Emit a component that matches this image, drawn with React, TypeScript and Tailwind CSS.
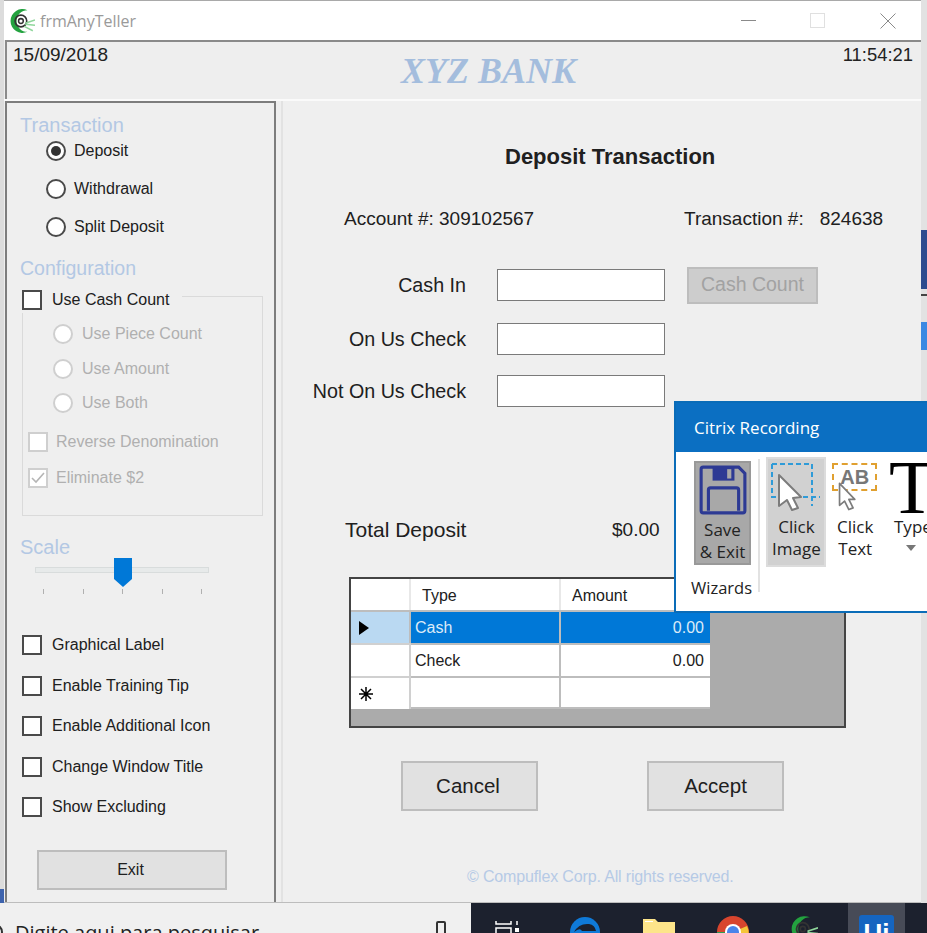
import React from "react";

const sans = "font-['Liberation_Sans',Arial,sans-serif]";
const seg = "font-['Open_Sans','Noto_Sans',sans-serif]";

function Radio({ checked = false, disabled = false }: { checked?: boolean; disabled?: boolean }) {
  return (
    <span className={`flex h-[20px] w-[20px] shrink-0 items-center justify-center rounded-full border-2 bg-white ${disabled ? "border-[#cfcfcf]" : "border-[#4a4a4a]"}`}>
      {checked && <span className="h-[10px] w-[10px] rounded-full bg-[#333]" />}
    </span>
  );
}

function Check({ disabled = false, checked = false }: { disabled?: boolean; checked?: boolean }) {
  return (
    <span className={`flex h-[20px] w-[20px] shrink-0 items-center justify-center border-2 bg-white ${disabled ? "border-[#cfcfcf]" : "border-[#4a4a4a]"}`}>
      {checked && (
        <svg width="16" height="14" viewBox="0 0 16 14">
          <path d="M2 7 L6 11 L14 2" fill="none" stroke="#b5b5b5" strokeWidth="1.6" />
        </svg>
      )}
    </span>
  );
}

function RadioRow({ label, checked, className = "" }: { label: string; checked?: boolean; className?: string }) {
  return (
    <div className={`ml-[39px] flex h-[26px] items-center gap-[8px] text-[16px] text-[#202020] ${className}`}>
      <Radio checked={checked} />
      <span>{label}</span>
    </div>
  );
}

function SubRadio({ label, className = "" }: { label: string; className?: string }) {
  return (
    <div className={`ml-[30px] flex h-[26px] items-center gap-[9px] text-[16px] text-[#b0b0b0] ${className}`}>
      <Radio disabled />
      <span>{label}</span>
    </div>
  );
}

function CheckRow({ label, className = "" }: { label: string; className?: string }) {
  return (
    <div className={`ml-[15px] flex h-[26px] items-center gap-[10px] text-[16px] text-[#202020] ${className}`}>
      <Check />
      <span>{label}</span>
    </div>
  );
}

function Section({ children, className = "" }: { children: React.ReactNode; className?: string }) {
  return <div className={`ml-[13px] h-[24px] text-[20px] leading-[24px] text-[#b3c8e4] ${className}`}>{children}</div>;
}

function FieldRow({ label, className = "", children }: { label: string; className?: string; children?: React.ReactNode }) {
  return (
    <div className={`flex h-[32px] items-center text-[19.7px] text-[#202020] ${className}`}>
      <span className="mt-[2px] w-[183px] whitespace-nowrap text-right">{label}</span>
      <span className="ml-[31px] h-[32px] w-[168px] border border-[#7a7a7a] bg-white" />
      {children}
    </div>
  );
}

function GridHeaderCell({ children }: { children?: React.ReactNode }) {
  return <div className="flex items-center border-r-2 border-[#e8e8e8] bg-white pl-[11px] pt-[2px] text-[16px] text-[#202020]">{children}</div>;
}

function LogoSwirl({ size }: { size: number }) {
  return (
    <svg width={size} height={size} viewBox="0 0 24 24">
      <path d="M17 2 A11 11 0 1 0 17 22 A9 9 0 0 1 17 2Z" fill="#23a23f" />
      <circle cx="11" cy="12" r="5.4" fill="none" stroke="#333" strokeWidth="1.5" />
      <circle cx="11" cy="12" r="2.2" fill="none" stroke="#333" strokeWidth="1.4" />
      <path d="M15 14 L24 11 M15 15 L24 16 M14 17 L22 21" stroke="#8fd69b" strokeWidth="1.4" />
    </svg>
  );
}

function Popup() {
  return (
    <div className={`absolute left-[674px] top-[401px] flex h-[212px] w-[260px] flex-col overflow-hidden border-2 border-r-0 border-[#0a6cb8] bg-white ${seg}`}>
      <div className="flex h-[49px] shrink-0 items-center bg-[#0b6fc2] pl-[18px] text-[17px] text-white">Citrix Recording</div>
      <div className="flex items-start text-[#222]">
        <div className="ml-[15px] flex w-[68px] flex-col items-start">
          <div className="mt-[9px] ml-[3px] flex h-[104px] w-[57px] flex-col items-center border-2 border-[#999] bg-[#a8a8a8]">
            <svg className="mt-[2px]" width="48" height="50" viewBox="0 0 46 48">
              <path d="M2 4 Q2 2 4 2 H38 L44 8 V44 Q44 46 42 46 H4 Q2 46 2 44Z" fill="none" stroke="#2d3a94" strokeWidth="3" />
              <path d="M13 2 H34 V15 H13Z" fill="#2d3a94" />
              <rect x="27" y="4" width="4" height="9" fill="#a8a8a8" />
              <path d="M9 44 V24 Q9 22 11 22 H36 Q38 22 38 24 V44" fill="none" stroke="#2d3a94" strokeWidth="3" />
            </svg>
            <span className="mt-[4px] text-center text-[17px] leading-[22px]">Save<br />&amp; Exit</span>
          </div>
          <span className="mt-[12px] text-[16.5px] leading-[22px]">Wizards</span>
        </div>
        <div className="mt-[7px] h-[133px] w-[2px] bg-[#e2e2e2]" />
        <div className="ml-[6px] mt-[5px] flex h-[110px] w-[60px] flex-col items-center border-2 border-[#dcdcdc] bg-[#d1d1d1]">
          <svg className="mt-[2px]" width="56" height="52" viewBox="0 0 56 52">
            <path d="M4 3 H44 V45" fill="none" stroke="#2f9bd8" strokeWidth="2" strokeDasharray="5 3" />
            <path d="M4 3 V36 H52" fill="none" stroke="#2f9bd8" strokeWidth="2" strokeDasharray="5 3" />
            <path d="M11 14 L33 36 L25 37 L30 47 L24 49 L19 39 L11 45Z" fill="#fff" stroke="#7c7c7c" strokeWidth="2" strokeLinejoin="round" />
          </svg>
          <span className="mt-[3px] text-center text-[17px] leading-[22px]">Click<br />Image</span>
        </div>
        <div className="ml-[1px] mt-[5px] flex w-[56px] flex-col items-center">
          <div className="relative mt-[6px] h-[48px] w-[50px]">
            <div className={`ml-[2px] flex h-[28px] w-[45px] items-center justify-center border-2 border-dashed border-[#e0a030] text-[20px] font-bold leading-none text-[#777] ${sans}`}>AB</div>
            <svg className="absolute left-[7px] top-[18px]" width="22" height="30" viewBox="0 0 26 34">
              <path d="M3 2 L21 21 L14 21 L19 31 L14 33 L9 23 L3 28Z" fill="#fff" stroke="#7c7c7c" strokeWidth="2" strokeLinejoin="round" />
            </svg>
          </div>
          <span className="mt-[5px] text-center text-[17px] leading-[22px]">Click<br />Text</span>
        </div>
        <div className="ml-[11px] mt-[5px] flex w-[40px] flex-col items-start">
          <span className="-ml-[5px] h-[54px] text-[76px] leading-[61px] text-black font-['Liberation_Serif',serif]">T</span>
          <span className="mt-[5px] whitespace-nowrap text-[17px] leading-[22px]">Type</span>
          <svg className="ml-[11px] mt-[7px]" width="12" height="6" viewBox="0 0 12 6"><path d="M1 0 H11 L6 6Z" fill="#777" /></svg>
        </div>
      </div>
    </div>
  );
}

export default function App() {
  return (
    <div className={`relative h-[933px] w-[927px] overflow-hidden bg-[#e4e4e4] ${sans}`}>
      <div className="flex h-[903px]">
        {/* left sliver of the desktop behind */}
        <div className="flex h-full w-[4px] shrink-0 flex-col justify-end bg-[#dcdcdc]">
          <div className="h-[14px] bg-[#3e63ad]" />
        </div>

        {/* window */}
        <div className="flex h-full w-[917px] shrink-0 flex-col border-t border-[#a9a9a9] bg-[#efefef]">
          <div className={`flex h-[39px] shrink-0 items-center bg-white ${seg}`}>
            <span className="ml-[5px]"><LogoSwirl size={26} /></span>
            <span className="ml-[5px] text-[16px] text-[#9a9a9a]">frmAnyTeller</span>
            <div className="ml-auto flex items-center">
              <span className="h-px w-[15px] bg-[#8a8a8a]" />
              <span className="ml-[54px] h-[15px] w-[15px] border border-[#e0e0e0]" />
              <svg className="ml-[55px] mr-[25px]" width="16" height="16" viewBox="0 0 16 16">
                <path d="M0.5 0.5 L15.5 15.5 M15.5 0.5 L0.5 15.5" stroke="#8a8a8a" strokeWidth="1" />
              </svg>
            </div>
          </div>

          {/* header band */}
          <div className="ml-px flex h-[59px] shrink-0 items-start justify-between border-l-2 border-t-2 border-[#8a8a8a] bg-[#eeeeee]">
            <span className="ml-[6px] mt-[1px] text-[19px] leading-[24px] text-[#222]">15/09/2018</span>
            <span className="font-['Liberation_Serif',serif] mt-[9px] ml-[26px] text-[36px] font-bold italic leading-[40px] text-[#a4bddd]">XYZ BANK</span>
            <span className="mr-[8px] mt-[1px] text-[18.4px] leading-[24px] text-[#222]">11:54:21</span>
          </div>
          <div className="h-[2px] shrink-0 bg-[#fafafa]" />

          <div className="flex min-h-0 flex-1 border-b border-[#bdbdbd]">
            {/* left panel */}
            <div className="ml-px flex w-[271px] shrink-0 flex-col border-x-2 border-t-2 border-[#7d7d7d] bg-[#efefef]">
              <Section className="mt-[10px]">Transaction</Section>
              <RadioRow label="Deposit" checked className="mt-[1px]" />
              <RadioRow label="Withdrawal" className="mt-[12px]" />
              <RadioRow label="Split Deposit" className="mt-[12px]" />
              <Section className="mt-[16px]">
                <span className="text-[19.5px]">Configuration</span>
              </Section>

              <div className="relative ml-[15px] mt-[16px] flex h-[220px] w-[241px] flex-col border border-[#dadada]">
                <div className="absolute -left-[1px] -top-[10px] flex h-[26px] items-center gap-[10px] bg-[#efefef] pr-[13px] text-[16px] text-[#202020]">
                  <Check />
                  <span>Use Cash Count</span>
                </div>
                <SubRadio label="Use Piece Count" className="mt-[24px]" />
                <SubRadio label="Use Amount" className="mt-[9px]" />
                <SubRadio label="Use Both" className="mt-[8px]" />
                <div className="ml-[5px] mt-[13px] flex h-[26px] items-center gap-[8px] text-[16px] text-[#b0b0b0]">
                  <Check disabled />
                  <span>Reverse Denomination</span>
                </div>
                <div className="ml-[5px] mt-[10px] flex h-[26px] items-center gap-[8px] text-[16px] text-[#b0b0b0]">
                  <Check disabled checked />
                  <span>Eliminate $2</span>
                </div>
              </div>

              <Section className="mt-[19px]">Scale</Section>
              <div className="relative ml-[28px] h-[36px] w-[174px]">
                <div className="mt-[8px] h-[6px] border border-[#d8dcdc] bg-[#e7eaea]" />
                <svg className="absolute left-[79px] -top-[1px]" width="18" height="29" viewBox="0 0 18 29">
                  <path d="M0 0 H18 V21 L9 29 L0 21Z" fill="#0078d7" />
                </svg>
                <div className="mt-[16px] flex justify-between pl-[8px] pr-[7px]">
                  <span className="h-[5px] w-px bg-[#b0b0b0]" />
                  <span className="h-[5px] w-px bg-[#b0b0b0]" />
                  <span className="h-[5px] w-px bg-[#b0b0b0]" />
                  <span className="h-[5px] w-px bg-[#b0b0b0]" />
                  <span className="h-[5px] w-px bg-[#b0b0b0]" />
                </div>
              </div>

              <CheckRow label="Graphical Label" className="mt-[37px]" />
              <CheckRow label="Enable Training Tip" className="mt-[15px]" />
              <CheckRow label="Enable Additional Icon" className="mt-[14px]" />
              <CheckRow label="Change Window Title" className="mt-[15px]" />
              <CheckRow label="Show Excluding" className="mt-[14px]" />

              <button className="ml-[30px] mt-[30px] flex h-[40px] w-[190px] items-center justify-center border-2 border-[#bdbdbd] bg-[#e1e1e1] pr-[3px] text-[16px] text-[#202020]">Exit</button>
            </div>

            {/* main panel */}
            <div className="ml-[5px] flex min-w-0 flex-1 flex-col border-l-2 border-[#e2e2e2]">
              <div className="mt-[44px] h-[24px] pl-[222px] text-[22px] font-bold leading-[24px] text-[#202020]">Deposit Transaction</div>
              <div className="mt-[38px] flex h-[24px] items-center pl-[61px] text-[19px] text-[#202020]">
                <span className="w-[340px]">Account #: 309102567</span>
                <span>Transaction #:<span className="ml-[16px]">824638</span></span>
              </div>
              <FieldRow label="Cash In" className="mt-[38px]">
                <button className="ml-[22px] h-[37px] w-[131px] border-2 border-[#bdbdbd] bg-[#cdcdcd] text-[19.5px] text-[#a2a2a2]">Cash Count</button>
              </FieldRow>
              <FieldRow label="On Us Check" className="mt-[22px]" />
              <FieldRow label="Not On Us Check" className="mt-[20px]" />
              <div className="mt-[110px] flex h-[26px] items-center pl-[62px] text-[19px] text-[#202020]">
                <span className="w-[267px] text-[21px]">Total Deposit</span>
                <span>$0.00</span>
              </div>

              {/* data grid */}
              <div className="ml-[66px] mt-[34px] h-[151px] w-[497px] border-2 border-[#444] bg-[#ababab]">
                <div className="grid w-[359px] grid-cols-[60px_150px_149px] grid-rows-[31px_33px_33px_33px] text-[16px] text-[#202020]">
                  <div className="border-r-2 border-[#e8e8e8] bg-white" />
                  <GridHeaderCell>Type</GridHeaderCell>
                  <GridHeaderCell>Amount</GridHeaderCell>

                  <div className="flex items-center border-t-2 border-r-2 border-[#bdbdbd] bg-[#bad9f2] pl-[8px]">
                    <svg width="10" height="14" viewBox="0 0 10 14"><path d="M0 0 L10 7 L0 14Z" fill="#000" /></svg>
                  </div>
                  <div className="flex items-center border-t-2 border-r-2 border-[#bdbdbd] bg-[#0078d7] pl-[4px] text-[#dcebf8]">Cash</div>
                  <div className="flex items-center justify-end border-t-2 border-[#bdbdbd] bg-[#0078d7] pr-[6px] text-[#dcebf8]">0.00</div>

                  <div className="border-t-2 border-r-2 border-[#d0d0d0] bg-white" />
                  <div className="flex items-center border-t-2 border-r-2 border-[#bdbdbd] bg-white pl-[4px]">Check</div>
                  <div className="flex items-center justify-end border-t-2 border-[#bdbdbd] bg-white pr-[6px]">0.00</div>

                  <div className="flex items-center border-t-2 border-r-2 border-[#d0d0d0] bg-white pl-[8px]">
                    <svg width="14" height="14" viewBox="0 0 14 14"><path d="M7 0 V14 M0 7 H14 M2 2 L12 12 M12 2 L2 12" stroke="#000" strokeWidth="1.5" /></svg>
                  </div>
                  <div className="border-y-2 border-r-2 border-[#bdbdbd] bg-white" />
                  <div className="border-y-2 border-[#bdbdbd] bg-white" />
                </div>
              </div>

              <div className="ml-[118px] mt-[33px] flex">
                <button className="h-[50px] w-[137px] border-2 border-[#bdbdbd] bg-[#e1e1e1] pr-[3px] text-[20.5px] text-[#202020]">Cancel</button>
                <button className="ml-[109px] h-[50px] w-[137px] border-2 border-[#bdbdbd] bg-[#e1e1e1] text-[20.5px] text-[#202020]">Accept</button>
              </div>
              <div className="ml-[184px] mt-[55px] h-[22px] text-[16px] leading-[22px] tracking-[-0.15px] text-[#b6cae6]">© Compuflex Corp. All rights reserved.</div>
            </div>
          </div>
        </div>

        {/* right sliver of the desktop behind */}
        <div className="flex h-full w-[6px] shrink-0 flex-col bg-[#e2e2e2]">
          <div className="mt-[230px] h-[59px] bg-[#2d4b8e]" />
          <div className="mt-[5px] h-[2px] bg-[#444]" />
          <div className="mt-[26px] h-[28px] bg-[#3a88e2]" />
        </div>
      </div>

      {/* taskbar */}
      <div className="flex h-[30px] overflow-hidden">
        <div className={`flex h-full w-[471px] shrink-0 items-start bg-[#f0f0f0] ${seg}`}>
          <span className="-ml-[13px] mt-[21px] h-[16px] w-[16px] shrink-0 rounded-full border-2 border-[#333]" />
          <span className="ml-[12px] mt-[17px] whitespace-nowrap text-[20px] leading-[26px] text-[#222]">Digite aqui para pesquisar</span>
          <span className="ml-[177px] mt-[18px] h-[20px] w-[10px] shrink-0 rounded-[2px] border-2 border-[#333]" />
        </div>
        <div className="flex h-full flex-1 items-start bg-[#1c212e]">
          <svg className="ml-[24px] mt-[18px]" width="24" height="14" viewBox="0 0 24 14">
            <path d="M1 0 V3 H16 V0 M1 14 V7 H16 V14" fill="none" stroke="#fff" strokeWidth="1.5" />
            <path d="M22 0 V4" stroke="#fff" strokeWidth="1.5" />
            <rect x="20" y="7" width="4" height="4" fill="#fff" />
          </svg>
          <svg className="ml-[50px] mt-[13px]" width="32" height="32" viewBox="0 0 32 32">
            <circle cx="16" cy="16" r="15" fill="#0f7ad8" />
            <path d="M5 16 Q10 7 20 8 Q26 9 27 15 H13 Q11 11 5 16Z" fill="#1c212e" />
          </svg>
          <svg className="ml-[42px] mt-[16px]" width="32" height="24" viewBox="0 0 32 24">
            <path d="M0 0 H12 L15 3 H32 V24 H0Z" fill="#fde58a" />
            <rect x="2" y="2" width="8" height="1" fill="#fff" />
          </svg>
          <svg className="ml-[42px] mt-[13px]" width="32" height="32" viewBox="0 0 32 32">
            <circle cx="16" cy="16" r="16" fill="#d8452e" />
            <path d="M16 16 L30 10 A16 16 0 0 1 30 24Z" fill="#f5c63a" />
            <path d="M16 16 L2 24 A16 16 0 0 1 0 16 Z" fill="#2f9c50" />
            <circle cx="16" cy="16" r="8" fill="#fff" />
            <circle cx="16" cy="16" r="6" fill="#4a84ea" />
          </svg>
          <span className="ml-[41px] mt-[12px]"><LogoSwirl size={28} /></span>
          <div className="ml-[30px] flex h-full w-[57px] justify-center bg-[#474b57] pt-[12px]">
            <span className="flex h-[36px] w-[35px] items-start justify-center rounded-[3px] bg-[#1565c0] text-[26px] font-bold leading-[36px] text-white">Ui</span>
          </div>
        </div>
      </div>

      <Popup />
    </div>
  );
}
